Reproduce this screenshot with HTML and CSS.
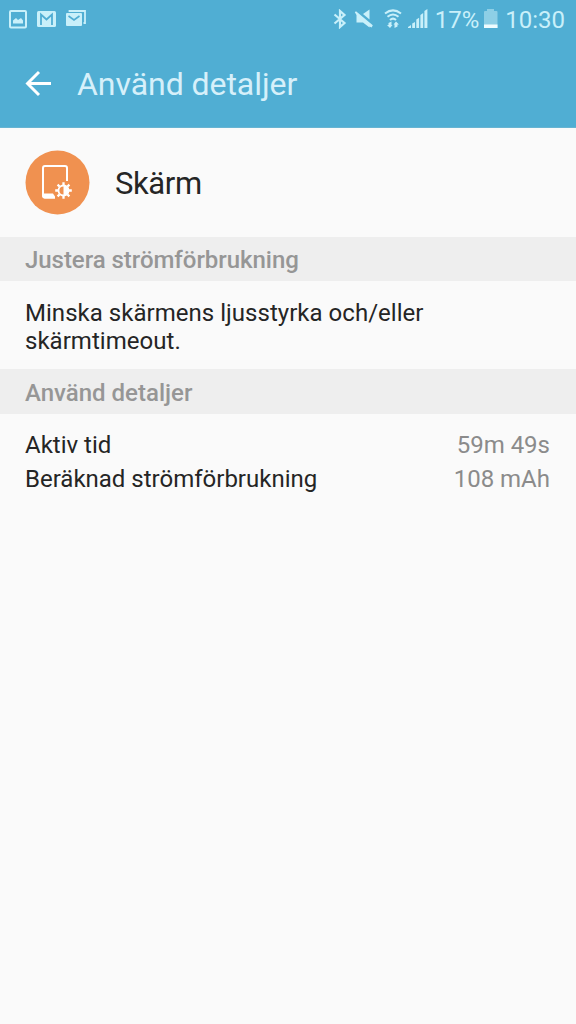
FILE: index.html
```html
<!DOCTYPE html>
<html lang="sv">
<head>
<meta charset="utf-8">
<meta name="viewport" content="width=device-width">
<title>Använd detaljer</title>
<link rel="stylesheet" href="styles.css">
</head>
<body>
<header class="top">
  <div class="status">
    <div class="notifications">
      <svg class="icon-picture" width="18" height="20" viewBox="0 0 18 20"><rect x="1" y="1" width="16" height="16.500" rx="1" fill="none" stroke="currentColor" stroke-width="2"/><path d="M4 13.500v-3l3-2.500 2 2 3-2 2 2.500v3z" fill="currentColor"/></svg>
      <svg class="icon-gmail" width="19" height="16" viewBox="0 0 19 16"><rect width="19" height="16" rx="1.5" fill="currentColor"/><path d="M4 14V3.500l5.500 5 5.500-5V14" fill="none" stroke="#50add3" stroke-width="1.800"/></svg>
      <svg class="icon-mails" width="20" height="17" viewBox="0 0 20 17"><path d="M3.500 2V1h15.500v12h-1.500" fill="none" stroke="currentColor" stroke-width="1.800"/><rect y="3" width="16" height="13" rx="1" fill="currentColor"/><path d="M2.500 6 8 10l5.500-4" fill="none" stroke="#50add3" stroke-width="1.600"/></svg>
    </div>
    <div class="system">
      <svg class="icon-bluetooth" width="14" height="20" viewBox="0 0 14 20"><path d="M1.500 5.500 11.500 14 7 18V2l4.500 4-10 8.500" fill="none" stroke="currentColor" stroke-width="2.200"/></svg>
      <svg class="icon-muted" width="20" height="19" viewBox="0 0 20 19"><path d="M9 5 15.500.5v10z" fill="currentColor"/><path d="M.8 3.300 2 2.300 18.800 16.200 17.600 18.500 15.500 17.500v1L9 13.500H2.500V6z" fill="currentColor"/></svg>
      <svg class="icon-wifi" width="18" height="20" viewBox="0 0 18 20"><g fill="none" stroke="currentColor" stroke-width="2"><path d="M1 4.500Q9-1.800 17 4.500M3.500 7.800Q9 3.200 14.500 7.800M6 11Q9 8.300 12 11"/></g><path d="M7.500 12.500v3.500h1L6 19 3 16h1.500v-2zM10.500 19v-3.500h-1l2.500-3 3 3h-1.500v2z" fill="currentColor"/></svg>
      <svg class="icon-signal" width="20" height="20" viewBox="0 0 20 20"><path d="M0 19h3v-3l-3 2zM4.200 14.500 7 13v6H4.200zM8.300 10.500l2.800-1.800V19H8.300zM12.400 6l2.800-2v15h-2.800zM16.400 2l3-2v19h-3z" fill="currentColor"/></svg>
      <span class="percent">17%</span>
      <svg class="icon-battery" width="14" height="20" viewBox="0 0 14 20"><path d="M0 3Q0 2 1 2h2V0h7v2h2.500q1 0 1 1v16H0z" fill="currentColor" opacity=".5"/><path d="M0 15.500h13.500V19H0z" fill="#eefcff"/></svg>
      <span class="clock">10:30</span>
    </div>
  </div>
  <div class="appbar">
    <svg class="back" width="27" height="28" viewBox="0 0 27 28"><path d="M14 2 2.500 13.500 14 25M2.500 13.500H26" fill="none" stroke="#fff" stroke-width="2.900"/></svg>
    <h1 class="title">Använd detaljer</h1>
  </div>
</header>
<main>
  <div class="app">
    <svg class="app-icon" width="65" height="65" viewBox="0 0 65 65"><circle cx="32.500" cy="32.500" r="32" fill="#f09150"/><path d="M30 47.500H20a2 2 0 0 1-2-2V18a2 2 0 0 1 2-2h20a2 2 0 0 1 2 2v13" fill="none" stroke="#fff" stroke-width="2"/><path d="M17.500 43.500H28l2 3v2H19.500a2 2 0 0 1-2-2z" fill="#fff"/><g transform="translate(38.500 40.500)" stroke="#fff" stroke-width="2.300"><path d="M0-5V-8.300M0 5v3.300M-5 0h-3.300M5 0h3.300M-4-4l-1.900-1.900M4 4l1.900 1.900M-4 4l-1.900 1.900M4-4l1.900-1.900"/><circle r="5" fill="#f09150" stroke-width="1.800"/><path d="M0-5.500a5.500 5.500 0 0 1 0 11z" fill="#fff" stroke="none"/></g></svg>
    <span class="app-name">Skärm</span>
  </div>
  <h2 class="section first">Justera strömförbrukning</h2>
  <p class="advice">Minska skärmens ljusstyrka och/eller<br>skärmtimeout.</p>
  <h2 class="section second">Använd detaljer</h2>
  <dl class="details">
    <div class="row"><dt class="label-time">Aktiv tid</dt><dd class="value-time">59m 49s</dd></div>
    <div class="row"><dt class="label-power">Beräknad strömförbrukning</dt><dd class="value-power">108 mAh</dd></div>
  </dl>
</main>
</body>
</html>
```

FILE: styles.css
```css
* { box-sizing: border-box; }
body { margin: 0; min-height: 1024px; background: #fafafa; color: #252525; font-family: Roboto, sans-serif; font-size: 24px; }
h1, h2, p, dl, dd { margin: 0; font-weight: 400; }
svg { display: block; flex: none; }
.top { height: 128px; background: #50aed3; border-bottom: 1px solid #67b4d2; }
.status { display: flex; justify-content: space-between; height: 40px; color: #c9f0fa; }
.notifications { display: flex; align-items: flex-start; padding: 10px 0 0 9px; }
.icon-gmail { margin: 1px 0 0 10px; }
.icon-mails { margin-left: 10px; }
.system { display: flex; align-items: flex-start; padding: 9px 11px 0 0; }
.icon-muted { margin-left: 7px; }
.icon-wifi { margin-left: 10px; }
.icon-signal { margin-left: 6px; }
.percent, .clock { line-height: 28px; margin-top: -3px; white-space: nowrap; }
.percent { margin-left: 7px; }
.icon-battery { margin-left: 5px; }
.clock { margin-left: 7px; }
.appbar { display: flex; padding: 30px 0 0 25px; }
.title { margin: -4px 0 0 25px; font-size: 32px; line-height: 37px; letter-spacing: -0.05px; color: #d6f0fa; }
.app { display: flex; align-items: center; height: 109px; padding-left: 25px; }
.app-icon { margin-top: -1px; }
.app-name { margin: 2px 0 0 25px; font-size: 31px; line-height: 36px; letter-spacing: -0.4px; }
.section { height: 45px; padding: 1px 25px 0; background: #eee; color: #969696; font-size: 24px; font-weight: 500; line-height: 44px; letter-spacing: -0.04px; white-space: nowrap; }
.first { height: 44px; }
.second { padding-top: 2px; letter-spacing: 0; }
.advice { height: 88px; padding: 18px 25px 0; line-height: 28px; letter-spacing: 0.03px; white-space: nowrap; }
.details { padding: 14px 26px 0 25px; }
.row { display: flex; justify-content: space-between; line-height: 34px; white-space: nowrap; }
.row dd { color: #8b8b8b; }
```
